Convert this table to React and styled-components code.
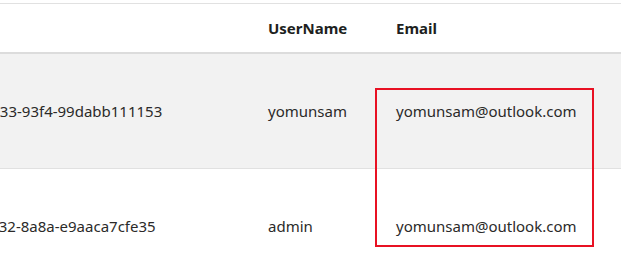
import React from "react";
import styled, { createGlobalStyle } from "styled-components";

const GlobalStyle = createGlobalStyle`
  html, body {
    margin: 0;
    padding: 0;
    background: #fff;
  }
  body {
    font-family: "Noto Sans", "Open Sans", sans-serif;
    color: #323130;
    overflow: hidden;
  }
`;

const Viewport = styled.div`
  position: relative;
  width: 621px;
  height: 272px;
  overflow: hidden;
  padding-top: 3px;
  box-sizing: border-box;
`;

// the grid is wider than the view, scrolled so the Id column sits off to the left
const Table = styled.div`
  margin-left: -130px;
  border-top: 1px solid #e1e1e1;
`;

const Row = styled.div`
  display: grid;
  grid-template-columns: 398px 128px 1fr;
  align-items: center;
  height: ${(p) => p.h}px;
  background: ${(p) => (p.striped ? "#f2f2f2" : "#fff")};
  border-bottom: ${(p) => p.line};
`;

const HeadCell = styled.div`
  font-weight: 700;
  font-size: 15px;
  color: #201f1e;
  white-space: nowrap;
`;

const Cell = styled.div`
  font-size: 15px;
  white-space: nowrap;
  color: #2b2a29;
`;

const IdCell = styled(Cell)`
  padding-left: 4px;
`;

const Highlight = styled.div`
  position: absolute;
  left: 375px;
  top: 88px;
  width: 219px;
  height: 159px;
  border: 2px solid #e81123;
  box-sizing: border-box;
  pointer-events: none;
`;

const users = [
  { id: "0d6c2f7e-1b4a-4a33-93f4-99dabb111153", name: "yomunsam", email: "yomunsam@outlook.com" },
  { id: "7f21e9b0-5c3d-4c32-8a8a-e9aaca7cfe35", name: "admin", email: "yomunsam@outlook.com" },
];

export default function App() {
  return (
    <>
      <GlobalStyle />
      <Viewport>
        <Table>
          <Row h={48} line="2px solid #dcdcdc">
            <HeadCell>Id</HeadCell>
            <HeadCell>UserName</HeadCell>
            <HeadCell>Email</HeadCell>
          </Row>
          {users.map((u, i) => (
            <Row key={u.id} h={114} striped={i % 2 === 0} line={i === 0 ? "1px solid #e1e1e1" : "none"}>
              <IdCell>{u.id}</IdCell>
              <Cell>{u.name}</Cell>
              <Cell>{u.email}</Cell>
            </Row>
          ))}
        </Table>
        <Highlight />
      </Viewport>
    </>
  );
}
